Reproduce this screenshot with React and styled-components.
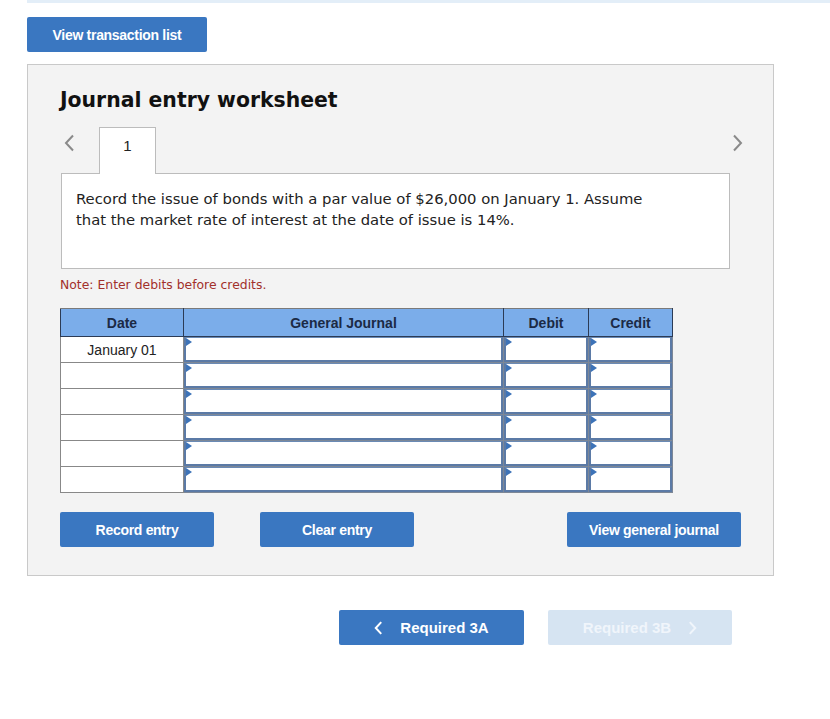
import styled, { createGlobalStyle } from "styled-components";

const GlobalStyle = createGlobalStyle`
  body {
    margin: 0;
    background: #fff;
    font-family: "Liberation Sans", Arial, sans-serif;
  }
`;

const Page = styled.div`
  padding-left: 27px;
  padding-bottom: 40px;
`;

const TopStrip = styled.div`
  height: 3px;
  background: #e3eef8;
`;

const Button = styled.button`
  display: flex;
  align-items: center;
  justify-content: center;
  gap: 17px;
  width: ${(p) => p.$width || 154}px;
  height: 35px;
  padding: 0;
  border: none;
  border-radius: 2px;
  background: ${(p) => (p.$disabled ? "#d6e4f2" : "#3a77c1")};
  color: ${(p) => (p.$disabled ? "#f0f5fb" : "#fff")};
  font-family: "Liberation Sans", Arial, sans-serif;
  font-size: ${(p) => p.$size || 14}px;
  font-weight: bold;
  letter-spacing: ${(p) => (p.$size ? "0" : "-0.3px")};
  cursor: pointer;

  & svg {
    width: 9px;
    height: 14px;
  }
`;

const TopButtonRow = styled.div`
  margin-top: 14px;
`;

const Panel = styled.div`
  box-sizing: border-box;
  margin-top: 12px;
  width: 747px;
  height: 512px;
  background: #f3f3f3;
  border: 1px solid #c9c9c9;
  padding: 22px 32px 0 32px;
`;

const Title = styled.h2`
  margin: 0;
  font-family: "DejaVu Sans", Verdana, sans-serif;
  font-size: 20.4px;
  line-height: 26px;
  font-weight: bold;
  color: #111;
`;

const TabRow = styled.div`
  display: flex;
  align-items: flex-start;
  margin-top: 14px;
  height: 47px;
`;

const Chevron = styled.div`
  display: flex;
  align-items: center;
  justify-content: center;
  width: 24px;
  height: 32px;
  margin-left: ${(p) => p.$ml || 0}px;
  margin-right: ${(p) => p.$mr || 0}px;

  & svg {
    width: 11px;
    height: 18px;
  }
`;

const Tab = styled.div`
  box-sizing: border-box;
  width: 57px;
  height: 47px;
  margin-left: 18px;
  background: #fff;
  border: 1px solid #bcbcbc;
  border-bottom: none;
  position: relative;
  z-index: 1;
  text-align: center;
  padding-top: 9px;
  font-size: 15px;
  color: #222;
`;

const Spacer = styled.div`
  flex: 1;
`;

const Prompt = styled.div`
  box-sizing: border-box;
  width: 669px;
  height: 96px;
  margin-left: 1px;
  margin-top: -1px;
  background: #fff;
  border: 1px solid #bcbcbc;
  padding: 14px 14px;
  font-family: "DejaVu Sans", Verdana, sans-serif;
  font-size: 14.8px;
  line-height: 21px;
  color: #222;

  & p {
    margin: 0;
    max-width: 585px;
  }
`;

const Note = styled.div`
  margin-top: 8px;
  font-family: "DejaVu Sans", Verdana, sans-serif;
  font-size: 12.4px;
  line-height: 16px;
  color: #a2302b;
`;

const Table = styled.table`
  margin-top: 15px;
  border-collapse: collapse;
  table-layout: fixed;
  width: 612px;
`;

const HeadCell = styled.th`
  box-sizing: border-box;
  width: ${(p) => p.$w}px;
  height: 28px;
  padding: 0;
  background: #7badea;
  border: 1px solid #2c3b55;
  border-top-color: #7a7a7a;
  font-size: 14px;
  font-weight: bold;
  color: #1b2a45;
`;

const DateCell = styled.td`
  box-sizing: border-box;
  height: 26px;
  padding: 0;
  background: #fff;
  border: 1px solid #888;
  text-align: center;
  font-size: 14px;
  color: #222;
`;

const EntryCell = styled.td`
  box-sizing: border-box;
  height: 26px;
  padding: 0;
  border: 1px solid #7d8796;
`;

const Input = styled.div`
  position: relative;
  box-sizing: border-box;
  height: 25px;
  background: #fff;
  border: 2px solid #5b7aa6;
  border-top-width: 1px;
  border-top-color: #6a8ab5;

  &::before {
    content: "";
    position: absolute;
    left: 0;
    top: 0;
    border-top: 4px solid transparent;
    border-bottom: 4px solid transparent;
    border-left: 6px solid #3d73b8;
  }
`;

const ActionRow = styled.div`
  display: flex;
  margin-top: 19px;
`;

const NavRow = styled.div`
  display: flex;
  gap: 24px;
  margin-top: 34px;
  padding-left: 312px;
`;

const ChevronLeft = ({ color = "#8a8a8a", width = 2 }) => (
  <svg viewBox="0 0 11 18">
    <polyline
      points="9,1.5 2,9 9,16.5"
      fill="none"
      stroke={color}
      strokeWidth={width}
    />
  </svg>
);

const ChevronRight = ({ color = "#8a8a8a", width = 2 }) => (
  <svg viewBox="0 0 11 18">
    <polyline
      points="2,1.5 9,9 2,16.5"
      fill="none"
      stroke={color}
      strokeWidth={width}
    />
  </svg>
);

const rows = ["January 01", "", "", "", "", ""];

export default function App() {
  return (
    <>
      <GlobalStyle />
      <Page>
        <TopStrip />
        <TopButtonRow>
          <Button $width={180}>View transaction list</Button>
        </TopButtonRow>
        <Panel>
          <Title>Journal entry worksheet</Title>
          <TabRow>
            <Chevron $ml={-3}>
              <ChevronLeft />
            </Chevron>
            <Tab>1</Tab>
            <Spacer />
            <Chevron $mr={-8}>
              <ChevronRight />
            </Chevron>
          </TabRow>
          <Prompt>
            <p>
              Record the issue of bonds with a par value of $26,000 on January
              1. Assume that the market rate of interest at the date of issue is
              14%.
            </p>
          </Prompt>
          <Note>Note: Enter debits before credits.</Note>
          <Table>
            <thead>
              <tr>
                <HeadCell $w={123}>Date</HeadCell>
                <HeadCell $w={320}>General Journal</HeadCell>
                <HeadCell $w={85}>Debit</HeadCell>
                <HeadCell $w={84}>Credit</HeadCell>
              </tr>
            </thead>
            <tbody>
              {rows.map((date, i) => (
                <tr key={i}>
                  <DateCell>{date}</DateCell>
                  <EntryCell>
                    <Input />
                  </EntryCell>
                  <EntryCell>
                    <Input />
                  </EntryCell>
                  <EntryCell>
                    <Input />
                  </EntryCell>
                </tr>
              ))}
            </tbody>
          </Table>
          <ActionRow>
            <Button>Record entry</Button>
            <Button style={{ marginLeft: 46 }}>Clear entry</Button>
            <Spacer />
            <Button $width={174}>View general journal</Button>
          </ActionRow>
        </Panel>
        <NavRow>
          <Button $width={185} $size={15}>
            <ChevronLeft color="#fff" width={2.6} />
            Required 3A
          </Button>
          <Button $width={184} $size={15} $disabled>
            Required 3B
            <ChevronRight color="#f0f5fb" width={2.6} />
          </Button>
        </NavRow>
      </Page>
    </>
  );
}
